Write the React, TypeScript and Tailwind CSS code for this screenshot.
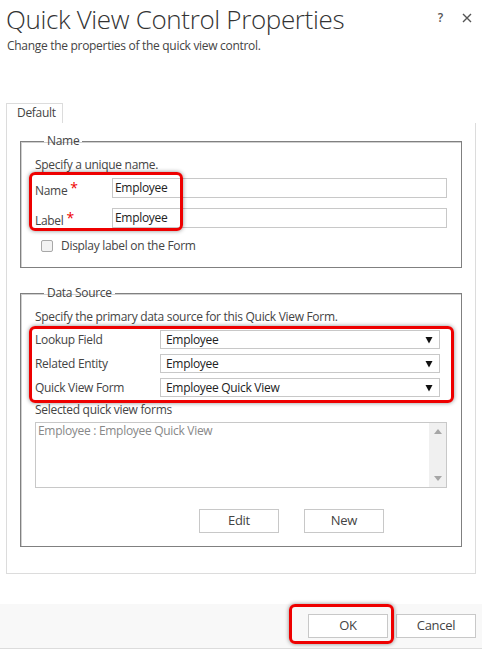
import React from 'react';

const Caret = () => (
  <svg width="8" height="8" viewBox="0 0 8 8" className="shrink-0">
    <polygon points="0.5,1 7.5,1 4,7.5" fill="#111" />
  </svg>
);

const Select = ({ value }: { value: string }) => (
  <div className="w-[280px] h-[19px] border border-[#c8c8c8] bg-white flex items-center justify-between pl-[5px] pr-[6px] text-[12px] text-[#222]">
    <span>{value}</span>
    <Caret />
  </div>
);

const Field = ({ label, value }: { label: string; value: string }) => (
  <div className="flex items-end">
    <div className="w-[77px] text-[12px] leading-[16px] text-[#444] translate-y-[1px]">
      {label}
      <span className="relative -top-[2px] ml-[3px] text-[#e00] text-[14px]">*</span>
    </div>
    <div className="flex-1 h-[20px] border border-[#c8c8c8] px-[2px] text-[12px] leading-[18px] text-[#222]">
      {value}
    </div>
  </div>
);

const Highlight = ({ className }: { className: string }) => (
  <div
    className={
      'absolute border-[3px] border-[#ee0000] rounded-[6px] shadow-[0_0_4px_rgba(0,0,0,0.45)] pointer-events-none ' +
      className
    }
  />
);

const App = () => {
  return (
    <div className="relative w-[482px] h-[649px] bg-white flex flex-col font-['Open_Sans',sans-serif] text-[#444] tracking-[-0.3px]">
      {/* header */}
      <div className="h-[103px] pl-[6px] pr-[10px]">
        <div className="flex items-start justify-between">
          <h1 className="text-[26px] leading-[38px] font-light text-[#333] tracking-[-0.35px]">Quick View Control Properties</h1>
          <div className="flex items-center gap-[19px] pt-[9px] text-[#555]">
            <span className="text-[12px] font-semibold">?</span>
            <svg width="10" height="10" viewBox="0 0 10 10">
              <path d="M1 1 L9 9 M9 1 L1 9" stroke="#555" strokeWidth="1.4" />
            </svg>
          </div>
        </div>
        <p className="text-[12px] leading-[16px] text-[#444] pl-[1px]">Change the properties of the quick view control.</p>
      </div>

      {/* tabs */}
      <div className="px-[6px]">
        <div className="w-[57px] h-[20px] border border-b-0 border-[#dcdcdc] text-[12px] leading-[18px] pl-[10px] text-[#444]">
          Default
        </div>
        <div className="h-[451px] border border-t-0 border-[#dcdcdc] px-[13px] pt-[10px]">
          <fieldset className="border border-[#808080] shadow-[inset_1px_1px_0_#d0d0d0] pl-[14px] pr-[14px] pb-[13px]">
            <legend className="ml-[9px] px-[3px] text-[12px] leading-[16px] text-[#444]">Name</legend>
            <p className="mt-[8px] text-[12px] leading-[16px]">Specify a unique name.</p>
            <div className="mt-[5px] flex flex-col gap-[10px]">
              <Field label="Name" value="Employee" />
              <Field label="Label" value="Employee" />
            </div>
            <div className="mt-[10px] flex items-center h-[16px] pl-[6px]">
              <div className="w-[12px] h-[12px] rounded-[2px] border border-[#a8a8a8] bg-[#f2f2f2]" />
              <span className="ml-[8px] text-[12px] leading-[16px]">Display label on the Form</span>
            </div>
          </fieldset>

          <fieldset className="mt-[17px] border border-[#808080] shadow-[inset_1px_1px_0_#d0d0d0] pl-[14px] pr-[21px] pb-[13px]">
            <legend className="ml-[9px] px-[3px] text-[12px] leading-[16px] text-[#444]">Data Source</legend>
            <p className="mt-[8px] text-[12px] leading-[16px]">Specify the primary data source for this Quick View Form.</p>
            <div className="mt-[5px] flex flex-col gap-[5px]">
              {[
                ['Lookup Field', 'Employee'],
                ['Related Entity', 'Employee'],
                ['Quick View Form', 'Employee Quick View'],
              ].map(([l, v]) => (
                <div key={l} className="flex items-center">
                  <div className="w-[125px] text-[12px] leading-[16px]">{l}</div>
                  <Select value={v} />
                </div>
              ))}
            </div>
            <p className="mt-[5px] text-[12px] leading-[16px]">Selected quick view forms</p>
            <div className="mt-[4px] mr-[-7px] h-[66px] border border-[#c8c8c8] flex">
              <div className="flex-1 pl-[2px] text-[12px] leading-[16px] text-[#888]">Employee : Employee Quick View</div>
              <div className="w-[17px] bg-[#f0f0f0] flex flex-col items-center justify-between py-[6px]">
                <svg width="8" height="5" viewBox="0 0 8 5">
                  <polygon points="0,5 8,5 4,0" fill="#a6a6a6" />
                </svg>
                <svg width="8" height="5" viewBox="0 0 8 5">
                  <polygon points="0,0 8,0 4,5" fill="#a6a6a6" />
                </svg>
              </div>
            </div>
            <div className="mt-[21px] flex gap-[25px] pl-[164px]">
              <button className="w-[80px] h-[24px] border border-[#c8c8c8] bg-white text-[13px] text-[#444]">Edit</button>
              <button className="w-[80px] h-[24px] border border-[#c8c8c8] bg-white text-[13px] text-[#444]">New</button>
            </div>
          </fieldset>
        </div>
      </div>

      <div className="flex-1" />

      {/* footer */}
      <div className="h-[45px] bg-[#f8f8f8] border-b border-[#dcdcdc] flex justify-end items-start pt-[10px] pr-[6px] gap-[8px]">
        <button className="w-[80px] h-[24px] border border-[#c8c8c8] bg-white text-[13px] text-[#444]">OK</button>
        <button className="w-[80px] h-[24px] border border-[#c8c8c8] bg-white text-[13px] text-[#444]">Cancel</button>
      </div>

      <Highlight className="left-[29px] top-[172px] w-[154px] h-[59px]" />
      <Highlight className="left-[29px] top-[326px] w-[425px] h-[77px]" />
      <Highlight className="left-[289px] top-[604px] w-[105px] h-[40px]" />
    </div>
  );
};

export default App;
